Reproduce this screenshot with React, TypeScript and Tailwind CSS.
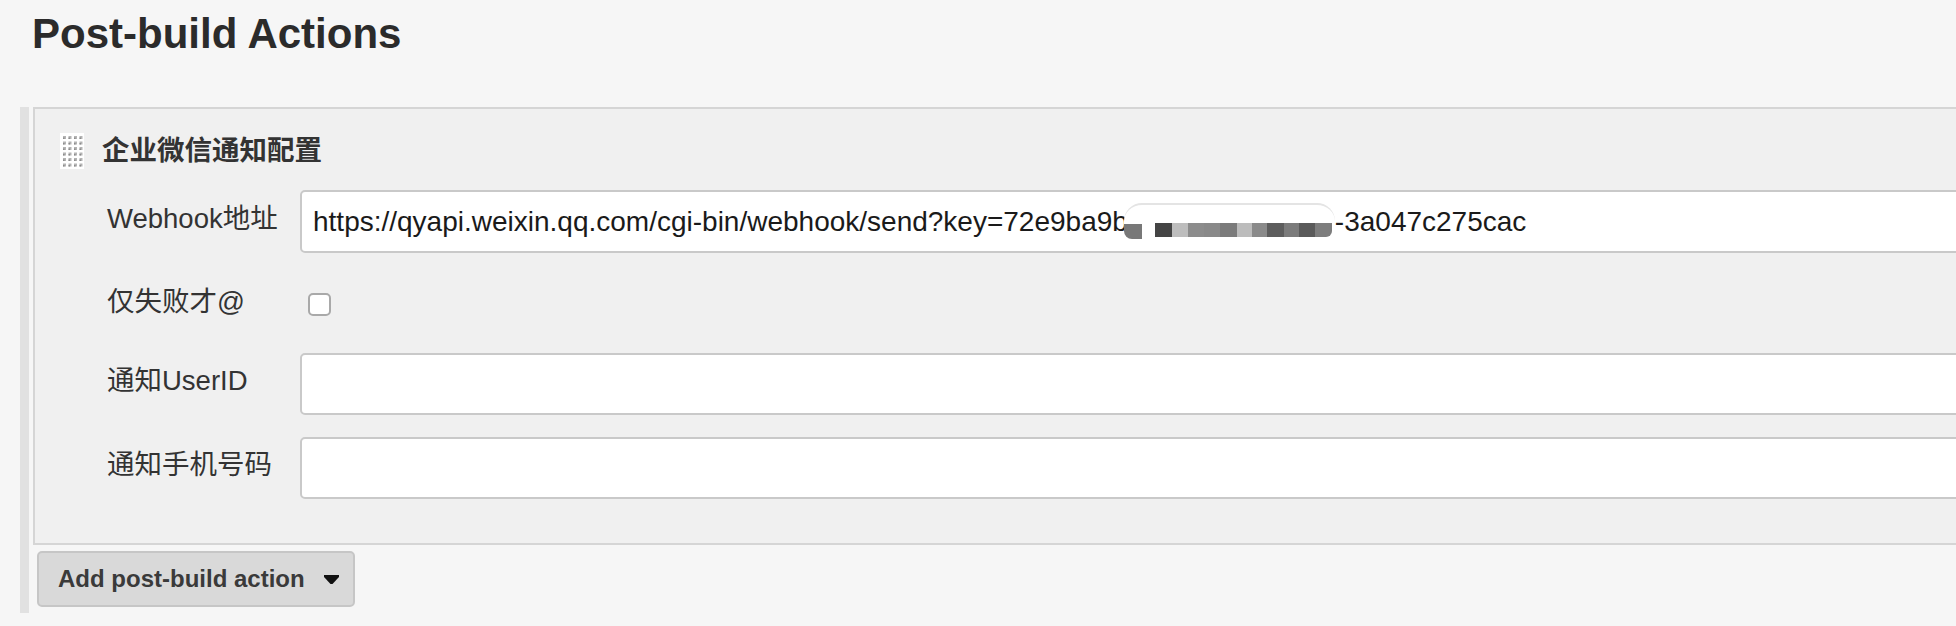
import React from "react";

const font = "font-['Liberation_Sans','Noto_Sans_CJK_SC',sans-serif]";

function GripIcon() {
  const dots: React.ReactElement[] = [];
  for (let r = 0; r < 6; r++) {
    for (let c = 0; c < 4; c++) {
      dots.push(
        <g key={`${r}-${c}`}>
          <rect x={3 + c * 5.5} y={3 + r * 5.5} width={3} height={3} fill="#b4b4b4" />
          <rect x={3 + c * 5.5} y={4.5 + r * 5.5} width={1.5} height={1.5} fill="#8c8c8c" />
        </g>
      );
    }
  }
  return (
    <svg width="24" height="36" viewBox="0 0 24 36" className="shrink-0">
      <rect width="24" height="36" fill="#ffffff" />
      {dots}
    </svg>
  );
}

// pixelated redaction blob over part of the webhook key
const redactBlocks = [
  { w: 17, c: "#444444" },
  { w: 16, c: "#bdbdbd" },
  { w: 16, c: "#8c8c8c" },
  { w: 16, c: "#898989" },
  { w: 17, c: "#7b7b7b" },
  { w: 15, c: "#bcbcbc" },
  { w: 15, c: "#8a8a8a" },
  { w: 17, c: "#5d5d5d" },
  { w: 15, c: "#7b7b7b" },
  { w: 16, c: "#5a5a5a" },
  { w: 17, c: "#7d7d7d" },
];

function Redaction() {
  return (
    <span className="relative inline-block align-middle w-[211px] h-[36px] ml-[-4px] -mt-[2px]">
      <span className="absolute inset-0 bg-white rounded-t-[18px] rounded-b-[10px] border-t-2 border-[#e4e4e4]" />
      <span className="absolute left-0 top-[21px] w-[18px] h-[15px] bg-[#787878] rounded-bl-[8px]" />
      <span className="absolute left-[31px] top-[20px] flex h-[14px]">
        {redactBlocks.map((b, i) => (
          <span
            key={i}
            className={i === redactBlocks.length - 1 ? "h-full rounded-br-[6px]" : "h-full"}
            style={{ width: b.w, background: b.c }}
          />
        ))}
      </span>
    </span>
  );
}

function Label({ children }: { children: React.ReactNode }) {
  return (
    <div className="w-[193px] shrink-0 pb-[6px] text-[27.5px] leading-[32px] text-[#333333] whitespace-nowrap">
      {children}
    </div>
  );
}

function TextBox({ children }: { children?: React.ReactNode }) {
  return (
    <div className="flex-1 h-full flex items-center bg-white border-2 border-[#c9c9c9] rounded-l-[5px] pl-[11px] text-[28px] text-[#1a1a1a] whitespace-nowrap overflow-hidden">
      {children}
    </div>
  );
}

export default function App() {
  return (
    <div className={`w-[1956px] h-[626px] overflow-hidden bg-[#f6f6f6] ${font}`}>
      <h1 className="h-[52px] pl-[32px] pt-[13px] text-[42px] leading-[42px] font-bold text-[#2b2b2b]">
        Post-build Actions
      </h1>

      <div className="mt-[55px] ml-[20px] w-[2100px] h-[506px] border-l-[9px] border-[#e1e1e1] pl-[4px]">
        <div className="bg-[#f0f0f0] border-2 border-[#d5d5d5] pt-[24px] pb-[44px]">
          <div className="flex items-center pl-[25px]">
            <GripIcon />
            <span className="ml-[18px] text-[27.5px] leading-[32px] font-bold text-[#333333]">
              企业微信通知配置
            </span>
          </div>

          <div className="mt-[21px] pl-[72px] flex items-center h-[63px]">
            <Label>Webhook地址</Label>
            <TextBox>
              <span>https://qyapi.weixin.qq.com/cgi-bin/webhook/send?key=72e9ba9b</span>
              <Redaction />
              <span>-3a047c275cac</span>
            </TextBox>
          </div>

          <div className="mt-[20px] pl-[72px] flex items-center h-[63px]">
            <Label>仅失败才@</Label>
            <div className="ml-[8px] w-[23px] h-[23px] bg-white border-2 border-[#a9a9a9] rounded-[5px]" />
          </div>

          <div className="mt-[17px] pl-[72px] flex items-center h-[62px]">
            <Label>通知UserID</Label>
            <TextBox />
          </div>

          <div className="mt-[22px] pl-[72px] flex items-center h-[62px]">
            <Label>通知手机号码</Label>
            <TextBox />
          </div>
        </div>

        <button className="mt-[6px] ml-[4px] w-[318px] h-[56px] flex items-center bg-[#d9d9d9] border-2 border-[#c6c6c6] rounded-[5px] pl-[19px] text-[24px] font-bold text-[#3a3a3a]">
          <span>Add post-build action</span>
          <svg width="15" height="10" viewBox="0 0 15 10" className="ml-[19px] mt-[2px]">
            <path d="M0 0h15v2L8.5 9h-2L0 2z" fill="#111111" />
          </svg>
        </button>
      </div>
    </div>
  );
}
